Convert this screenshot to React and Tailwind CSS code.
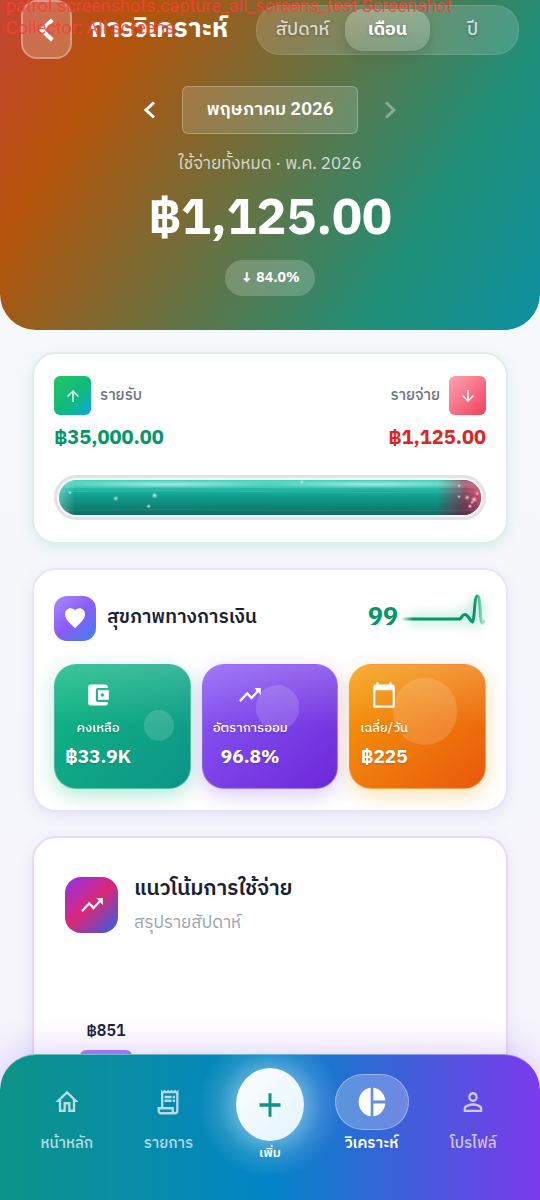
import { useState } from "react";
import {
  MdAccountBalanceWallet,
  MdAdd,
  MdArrowDownward,
  MdArrowUpward,
  MdCalendarToday,
  MdFavorite,
  MdOutlineHome,
  MdOutlineReceiptLong,
  MdPersonOutline,
  MdPieChart,
  MdTrendingUp,
} from "react-icons/md";

const periods = [
  { id: "week", label: "สัปดาห์" },
  { id: "month", label: "เดือน" },
  { id: "year", label: "ปี" },
];

const stats = [
  {
    label: "คงเหลือ",
    value: "฿33.9K",
    icon: MdAccountBalanceWallet,
    tile: "bg-[linear-gradient(138deg,#10b981,#0d9488)] shadow-[0_6px_20px_rgba(16,185,129,0.32)]",
    bubble: "left-[89px] top-[45px] w-[30px] h-[31px]",
  },
  {
    label: "อัตราการออม",
    value: "96.8%",
    icon: MdTrendingUp,
    tile: "bg-[linear-gradient(138deg,#8b5cf6,#6d28d9)] shadow-[0_6px_20px_rgba(139,92,246,0.32)]",
    bubble: "left-[53px] top-[20px] w-[43px] h-[45px]",
  },
  {
    label: "เฉลี่ย/วัน",
    value: "฿225",
    icon: MdCalendarToday,
    tile: "bg-[linear-gradient(138deg,#f59e0b,#ea580c)] shadow-[0_6px_20px_rgba(245,158,11,0.32)]",
    bubble: "left-[43px] top-[13px] w-[64px] h-[67px]",
  },
];

// x, y, radius of the bubbles in the liquid
const sparks = [
  [11, 13, 1],
  [57, 19, 1.4],
  [96, 16, 1.6],
  [90, 27, 1.2],
  [244, 2, 1],
  [402, 6, 1],
  [402, 17, 1],
  [410, 18, 1.4],
  [417, 20, 1.6],
  [415, 23, 1],
  [420, 14, 1.1],
  [413, 27, 1.2],
];

const Chevron = ({ right, className }) => (
  <svg className={className} viewBox="0 0 12 18" fill="none" stroke="currentColor" strokeWidth="3">
    <path d={right ? "M2 1.500L10 9L2 16.500" : "M10 1.500L2 9L10 16.500"} />
  </svg>
);

const LiquidBar = () => (
  <div className="mt-5 h-[45px] rounded-full border-[3px] border-[#e1e3e7] bg-[#f5f6f8] p-[2px]">
    <div className="h-full rounded-full overflow-hidden">
      <svg className="block w-full h-full" viewBox="0 0 424 36" preserveAspectRatio="none">
        <defs>
          <linearGradient id="liquid" x1="0" y1="0" x2="0" y2="1">
            <stop offset="0" stopColor="#3fd6c0" />
            <stop offset="0.22" stopColor="#2bbfaa" />
            <stop offset="0.4" stopColor="#14a594" />
            <stop offset="0.75" stopColor="#0d8478" />
            <stop offset="1" stopColor="#0f6b65" />
          </linearGradient>
          <linearGradient id="spent" x1="0" y1="0" x2="1" y2="0">
            <stop offset="0" stopColor="#a83c5c" stopOpacity="0" />
            <stop offset="0.3" stopColor="#9a4560" stopOpacity="0.4" />
            <stop offset="0.65" stopColor="#a83c5c" stopOpacity="0.85" />
            <stop offset="1" stopColor="#e85577" />
          </linearGradient>
          <linearGradient id="leftShine" x1="0" y1="0" x2="1" y2="0">
            <stop offset="0" stopColor="#fff" stopOpacity="0.3" />
            <stop offset="1" stopColor="#fff" stopOpacity="0" />
          </linearGradient>
          <linearGradient id="depth" x1="0" y1="0" x2="0" y2="1">
            <stop offset="0.3" stopColor="#1a1030" stopOpacity="0" />
            <stop offset="1" stopColor="#1a1030" stopOpacity="0.4" />
          </linearGradient>
          <linearGradient id="depthEdge" x1="0" y1="0" x2="1" y2="0">
            <stop offset="0" stopColor="#000" />
            <stop offset="0.5" stopColor="#fff" />
          </linearGradient>
          <mask id="depthMask">
            <rect x="380" width="44" height="36" fill="url(#depthEdge)" />
          </mask>
          <radialGradient id="gloss">
            <stop offset="0" stopColor="#fff" stopOpacity="0.55" />
            <stop offset="1" stopColor="#fff" stopOpacity="0.14" />
          </radialGradient>
        </defs>
        <rect width="424" height="36" fill="url(#liquid)" />
        <rect x="380" width="44" height="36" fill="url(#spent)" />
        <rect x="380" width="44" height="36" fill="url(#depth)" mask="url(#depthMask)" />
        <rect width="16" height="36" fill="url(#leftShine)" />
        <rect x="6" y="1" width="206" height="7" fill="url(#gloss)" />
        <rect x="212" y="1" width="206" height="7" fill="url(#gloss)" />
        <path d="M0 12Q106 10 212 12T424 12" fill="none" stroke="#fff" strokeOpacity="0.12" />
        <path d="M6 31Q106 30 212 31T420 31" fill="none" stroke="#fff" strokeOpacity="0.1" />
        {sparks.map(([x, y, r]) => (
          <g key={`${x}-${y}`} fill="#fff">
            <circle cx={x} cy={y} r={r * 1.7} opacity="0.25" />
            <circle cx={x} cy={y} r={r * 0.8} opacity="0.6" />
          </g>
        ))}
      </svg>
    </div>
  </div>
);

const Heartbeat = () => (
  <svg className="w-[86px] h-[48px] overflow-visible" viewBox="0 0 86 48" fill="none">
    <defs>
      <linearGradient id="beat" gradientUnits="userSpaceOnUse" x1="1" y1="0" x2="86" y2="0">
        <stop offset="0" stopColor="#059669" stopOpacity="0" />
        <stop offset="0.14" stopColor="#059669" />
        <stop offset="0.87" stopColor="#059669" />
        <stop offset="0.93" stopColor="#059669" stopOpacity="0.5" />
        <stop offset="1" stopColor="#059669" stopOpacity="0.1" />
      </linearGradient>
      <filter id="beatGlow" x="-30%" y="-60%" width="160%" height="220%">
        <feGaussianBlur stdDeviation="6" />
      </filter>
    </defs>
    <path d="M10 25H60L64 21L73 28L77 4L80 25" stroke="#10b981" strokeWidth="10" opacity="0.25" filter="url(#beatGlow)" />
    <path
      d="M1 25H60C61 25 62 20.500 65 20.500C68 20.500 69 26 72.500 28C75 25 74 2 77.500 2C81 2 79.500 29 82.500 29C84 29 84 27 85 26"
      stroke="url(#beat)"
      strokeWidth="3"
      strokeLinejoin="round"
    />
  </svg>
);

const NavItem = ({ icon: Icon, label, active }) => (
  <a
    href="#"
    className={`flex-1 flex flex-col items-center pt-[19px] ${active ? "text-white" : "text-white/70"}`}
  >
    <span
      className={`flex items-center justify-center w-[74px] h-14 rounded-[28px] border ${
        active ? "bg-white/25 border-white/35" : "border-transparent"
      }`}
    >
      <Icon
        preserveAspectRatio="none"
        className={active ? "w-8 h-[34px]" : "w-7 h-[30px]"}
      />
    </span>
    <span className={`mt-[2px] text-[15px] leading-6 ${active ? "font-semibold" : "font-medium"}`}>{label}</span>
  </a>
);

const App = () => {
  const [period, setPeriod] = useState("month");

  return (
    <div className="relative h-screen overflow-hidden bg-[linear-gradient(180deg,#f6fafc,#f5f4fb)] font-['IBM_Plex_Sans_Thai','Noto_Sans','Noto_Sans_Thai',sans-serif]">
      <header className="h-[330px] rounded-b-[36px] overflow-hidden text-white bg-[linear-gradient(121deg,#c64434_0%,#b45309_20%,#1f8f78_76%,#0891b2_108%)]">
        <div className="flex items-center h-[59px] px-[21px]">
          <button
            aria-label="ย้อนกลับ"
            className="flex items-center justify-center w-[51px] h-[59px] rounded-2xl border-2 border-white/30 bg-white/20"
          >
            <Chevron className="w-4 h-6" />
          </button>
          <h1 className="ml-[18px] text-[26px] leading-9 font-bold whitespace-nowrap">การวิเคราะห์</h1>
          <div className="ml-auto flex items-center w-[263px] h-[50px] p-[3px] rounded-3xl bg-white/15 border border-white/10">
            {periods.map((p) => (
              <button
                key={p.id}
                onClick={() => setPeriod(p.id)}
                className={`flex-1 h-[42px] rounded-[18px] text-lg leading-7 [text-shadow:0_1px_3px_rgba(0,0,0,0.3)] ${
                  period === p.id
                    ? "font-bold bg-[linear-gradient(180deg,rgba(255,255,255,0.28),rgba(255,255,255,0.14))] shadow-[0_4px_12px_rgba(0,0,0,0.14)]"
                    : "font-medium text-white/75"
                }`}
              >
                {p.label}
              </button>
            ))}
          </div>
        </div>

        <div className="mt-[27px] flex items-center justify-center gap-4">
          <button aria-label="เดือนก่อนหน้า" className="flex items-center justify-center w-8 h-12">
            <Chevron className="w-3 h-[18px]" />
          </button>
          <button className="w-[176px] h-12 rounded-md border border-white/25 bg-white/15 text-lg leading-7 font-semibold whitespace-nowrap">
            พฤษภาคม 2026
          </button>
          <button aria-label="เดือนถัดไป" disabled className="flex items-center justify-center w-8 h-12 text-white/35">
            <Chevron right className="w-3 h-[18px]" />
          </button>
        </div>

        <div className="flex flex-col items-center">
          <p className="mt-4 text-[17px] leading-7 text-white/75">ใช้จ่ายทั้งหมด · พ.ค. 2026</p>
          <p className="mt-[6px] text-[50px] leading-[72px] font-bold">฿1,125.00</p>
          <p className="mt-1 flex items-center h-9 px-[15px] rounded-full bg-white/20 text-sm leading-6 font-bold">
            ↓ 84.0%
          </p>
        </div>
      </header>

      <main className="flex flex-col gap-6 px-8 pt-[22px] text-[#1a1f36]">
        <section className="h-48 px-5 pt-[22px] rounded-3xl bg-white border-2 border-[#dcefe9] shadow-[0_4px_14px_rgba(13,148,136,0.12)]">
          <div className="flex justify-between">
            <div>
              <div className="flex items-center gap-[9px]">
                <span className="flex items-center justify-center w-[37px] h-[39px] rounded-md text-white bg-[linear-gradient(135deg,#22c55e,#10b981_60%,#0ea5e9)]">
                  <MdArrowUpward className="w-[18px] h-5" />
                </span>
                <span className="text-[15px] leading-6 font-medium text-gray-500">รายรับ</span>
              </div>
              <p className="mt-2 text-xl leading-8 font-bold text-[#059669]">฿35,000.00</p>
            </div>
            <div className="text-right">
              <div className="flex items-center justify-end gap-[9px]">
                <span className="text-[15px] leading-6 font-medium text-gray-500">รายจ่าย</span>
                <span className="flex items-center justify-center w-[37px] h-[39px] rounded-md text-white bg-[linear-gradient(135deg,#fda4af,#f43f5e)]">
                  <MdArrowDownward className="w-[18px] h-5" />
                </span>
              </div>
              <p className="mt-2 text-xl leading-8 font-bold text-[#dc2626]">฿1,125.00</p>
            </div>
          </div>
          <LiquidBar />
        </section>

        <section className="h-[244px] px-5 pt-[18px] rounded-3xl bg-white border-2 border-[#e9e4fb] shadow-[0_4px_14px_rgba(100,90,180,0.12)]">
          <div className="flex items-center h-[60px]">
            <span className="flex items-center justify-center w-[42px] h-[45px] rounded-[13px] text-white bg-[linear-gradient(137deg,#a78bfa,#8b5cf6_50%,#3b82f6)]">
              <MdFavorite preserveAspectRatio="none" className="w-6 h-[26px]" />
            </span>
            <h2 className="ml-[11px] text-[19px] leading-8 font-semibold">สุขภาพทางการเงิน</h2>
            <span className="ml-auto mr-[2px] text-[25px] leading-9 font-bold text-[#059669]">99</span>
            <Heartbeat />
          </div>
          <div className="mt-4 grid grid-cols-3 gap-[11px]">
            {stats.map(({ label, value, icon: Icon, tile, bubble }) => (
              <div
                key={label}
                className={`relative flex h-[125px] rounded-[22px] border border-white/25 overflow-hidden text-white ${tile}`}
              >
                <span className="absolute inset-x-0 top-0 h-1/2 bg-[linear-gradient(180deg,rgba(255,255,255,0.18),rgba(255,255,255,0))]" />
                <span className={`absolute rounded-full bg-white/15 ${bubble}`} />
                <div className="relative flex flex-col items-center pl-[10px] pt-4 whitespace-nowrap [text-shadow:0_1px_2px_rgba(0,0,0,0.2)]">
                  <Icon preserveAspectRatio="none" className="w-[26px] h-7" />
                  <span className="mt-[7px] text-[13px] leading-6 font-medium">{label}</span>
                  <span className="mt-[2px] text-[19px] leading-8 font-bold">{value}</span>
                </div>
              </div>
            ))}
          </div>
        </section>

        <section className="h-[400px] px-[31px] pt-[33px] rounded-3xl bg-white border-2 border-[#ead9fb] shadow-[0_4px_14px_rgba(120,80,180,0.12)]">
          <div className="flex items-center">
            <span className="flex items-center justify-center w-[53px] h-14 rounded-2xl text-white bg-[linear-gradient(137deg,#9333ea,#db2777_50%,#2563eb)]">
              <MdTrendingUp preserveAspectRatio="none" className="w-[26px] h-7" />
            </span>
            <div className="ml-4">
              <h2 className="text-[21px] leading-9 font-semibold">แนวโน้มการใช้จ่าย</h2>
              <p className="text-[17px] leading-8 text-gray-400">สรุปรายสัปดาห์</p>
            </div>
          </div>
          <div className="mt-[81px] ml-[15px] w-[52px] text-center">
            <p className="text-base leading-6 font-semibold">฿851</p>
            <div className="mt-[6px] h-[120px] rounded-t-md bg-[#a17ff5]" />
          </div>
        </section>
      </main>

      <nav className="absolute inset-x-0 bottom-0 flex h-[146px] px-4 rounded-t-[36px] border-t border-white/40 shadow-[0_-4px_36px_rgba(124,58,237,0.24)] bg-[radial-gradient(circle_at_50%_35%,rgba(255,255,255,0.34)_34px,rgba(255,255,255,0.12)_52px,rgba(255,255,255,0)_72px),linear-gradient(90deg,#0d9488,#0284c7_50%,#7c3aed)]">
        <NavItem icon={MdOutlineHome} label="หน้าหลัก" />
        <NavItem icon={MdOutlineReceiptLong} label="รายการ" />
        <a href="#" className="flex-1 flex flex-col items-center pt-[13px] text-white">
          <span className="flex items-center justify-center w-[68px] h-[73px] rounded-[50%] text-[#0d9488] bg-[linear-gradient(137deg,#ffffff,#e0f2fe)]">
            <MdAdd preserveAspectRatio="none" className="w-9 h-10" />
          </span>
          <span className="text-[13px] leading-6 font-semibold">เพิ่ม</span>
        </a>
        <NavItem icon={MdPieChart} label="วิเคราะห์" active />
        <NavItem icon={MdPersonOutline} label="โปรไฟล์" />
      </nav>

      <p className="absolute left-[6px] top-[-5px] w-[480px] font-['Roboto',sans-serif] text-lg leading-[22px] text-[#f44336]/90 pointer-events-none">
        patrol.screenshots.capture_all_screens_test Screenshot Collector: All screens
      </p>
    </div>
  );
};

export default App;
